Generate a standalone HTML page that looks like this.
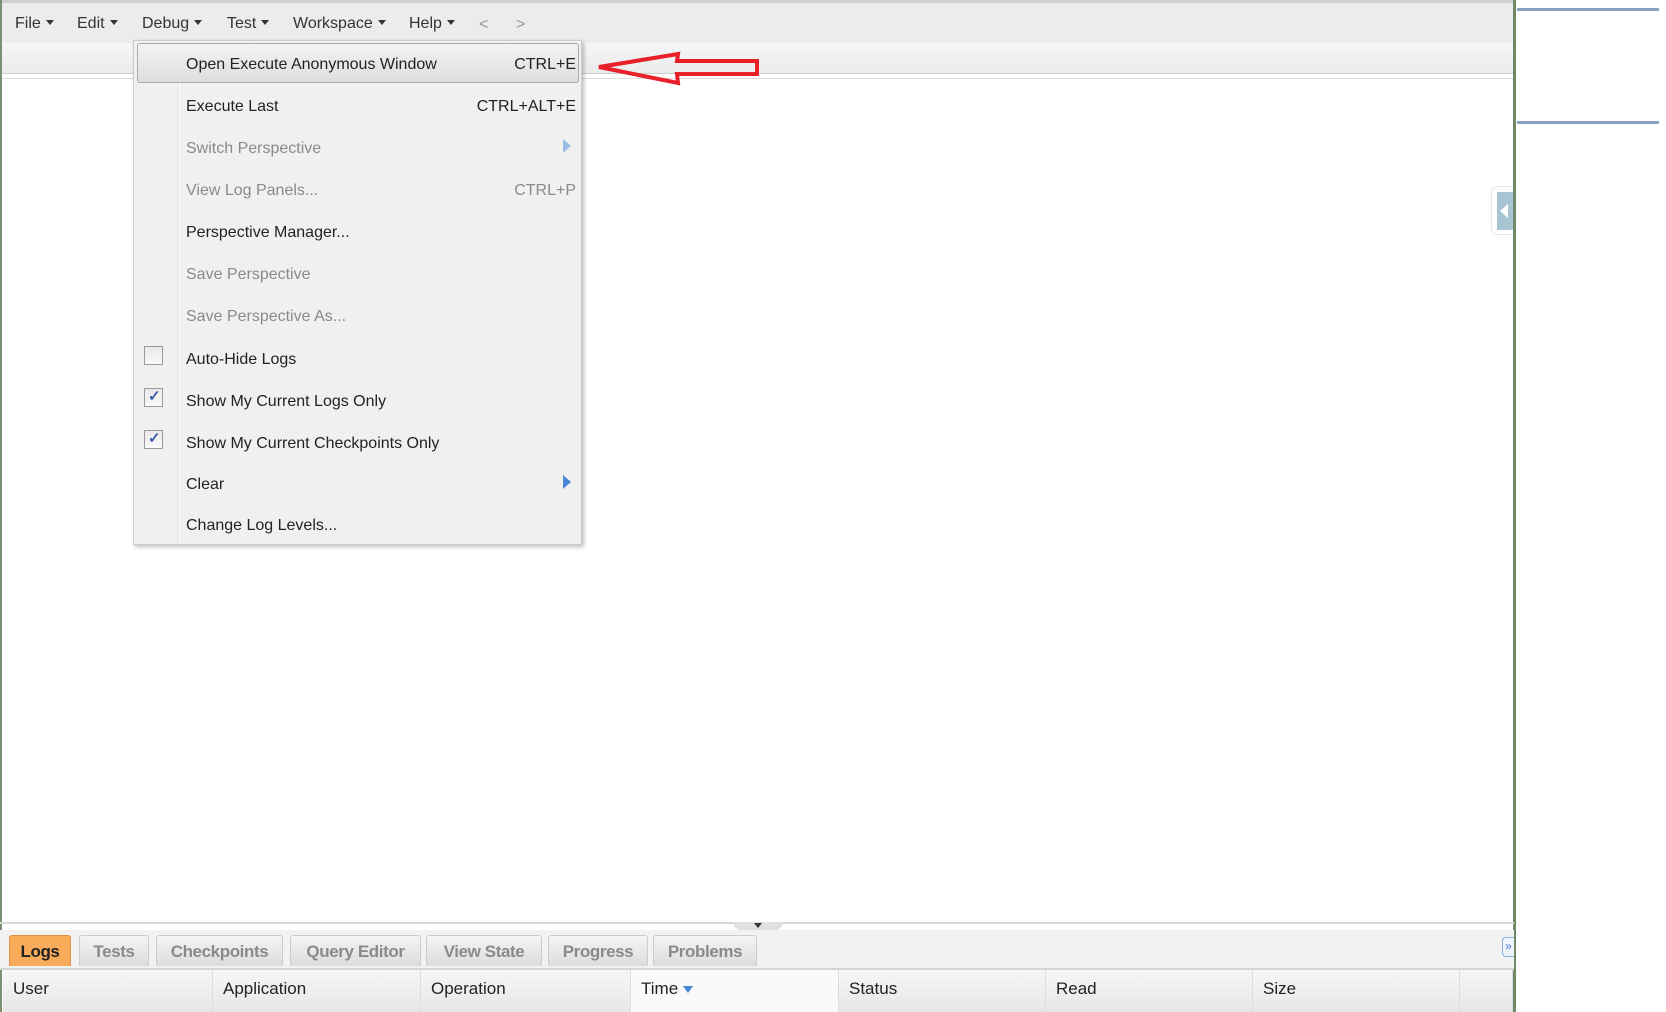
<!DOCTYPE html>
<html><head><meta charset="utf-8"><style>
*{margin:0;padding:0;box-sizing:border-box}
body{width:1666px;height:1012px;position:relative;background:#fff;font-family:"Liberation Sans",sans-serif;overflow:hidden;color:#222}
.abs{position:absolute}
.mb{left:0;top:0;width:1514px;height:43px;background:#ececec;border-top:3px solid #cfcfcf}
.mi{position:absolute;top:15px;font-size:16px;color:#333}
.mi:after{content:"";display:inline-block;margin-left:5px;vertical-align:3px;border:4px solid transparent;border-top:5px solid #333;border-bottom:0}
.tb{left:0;top:43px;width:1514px;height:31px;background:linear-gradient(#f6f6f6,#ebebeb);border-bottom:1px solid #ccc}
.menu{left:133px;top:40px;width:449px;height:505px;background:#f0f0f0;border:1px solid #ccc;box-shadow:2px 2px 4px rgba(0,0,0,.25)}
.gut{left:44px;top:0;width:2px;height:100%;background:#e2e2e2;border-right:1px solid #fff}
.it{position:absolute;left:52px;font-size:16px;color:#222;width:390px}
.it.d{color:#8a8a8a}
.sc{position:absolute;right:0;top:0}
.hl{left:3px;top:2px;width:442px;height:40px;border:1px solid #aaa;border-radius:3px;background:linear-gradient(#f3f3f3,#dedede)}
.cb{position:absolute;left:10px;width:19px;height:19px;border:1px solid #9a9a9a;background:linear-gradient(#e8e8e8,#fafafa)}
.cb.c:after{content:"✓";position:absolute;left:3px;top:-2px;color:#3b5bb0;font-size:15px;font-weight:bold}
.tri{position:absolute;right:10px;width:0;height:0;border-top:7px solid transparent;border-bottom:7px solid transparent;border-left:8px solid #4a86d8}
.tab{position:absolute;top:935px;height:31px;background:linear-gradient(#f4f4f4,#dcdcdc);border:1px solid #ccc;border-bottom:0;border-radius:3px 3px 0 0;font-size:17px;font-weight:bold;color:#8a8a8a;text-align:center;line-height:32px;letter-spacing:-0.4px}
.col{position:absolute;top:970px;height:42px;border-right:1px solid #ddd;font-size:17px;line-height:38px;padding-left:10px;background:linear-gradient(#f7f7f7,#e6e6e6)}
</style></head><body>
<div class="abs mb"></div>
<div class="mi" style="left:15px">File</div>
<div class="mi" style="left:77px">Edit</div>
<div class="mi" style="left:142px">Debug</div>
<div class="mi" style="left:227px">Test</div>
<div class="mi" style="left:293px">Workspace</div>
<div class="mi" style="left:409px">Help</div>
<div class="abs" style="left:479px;top:16px;font-size:16px;color:#999">&lt;</div>
<div class="abs" style="left:516px;top:16px;font-size:16px;color:#999">&gt;</div>
<div class="abs tb"></div>
<div class="abs" style="left:0;top:78px;width:1514px;height:1px;background:#ddd"></div>
<div class="abs" style="left:0;top:0;width:2px;height:1012px;background:#7a9070"></div>
<div class="abs" style="left:1513px;top:0;width:3px;height:1012px;background:#6f8a68"></div>
<div class="abs" style="left:1517px;top:8px;width:142px;height:3px;background:#8aa0c0"></div>
<div class="abs" style="left:1517px;top:121px;width:142px;height:3px;background:#8aa0c0"></div>
<div class="abs" style="left:1491px;top:186px;width:22px;height:49px;border:1px solid #e5e5e5;border-right:0;border-radius:6px 0 0 6px;background:#fff"></div>
<div class="abs" style="left:1497px;top:192px;width:16px;height:38px;background:#a8c4d2"></div>
<div class="abs" style="left:1500px;top:204px;border-top:7px solid transparent;border-bottom:7px solid transparent;border-right:8px solid #fff"></div>

<div class="abs menu">
<div class="abs gut"></div>
<div class="abs hl"></div>
<div class="it" style="top:15px">Open Execute Anonymous Window<span class="sc">CTRL+E</span></div>
<div class="it" style="top:57px">Execute Last<span class="sc">CTRL+ALT+E</span></div>
<div class="it d" style="top:99px">Switch Perspective</div>
<div class="tri" style="top:98px;border-left-color:#9cbce6"></div>
<div class="it d" style="top:141px">View Log Panels...<span class="sc">CTRL+P</span></div>
<div class="it" style="top:183px">Perspective Manager...</div>
<div class="it d" style="top:225px">Save Perspective</div>
<div class="it d" style="top:267px">Save Perspective As...</div>
<div class="cb" style="top:305px"></div>
<div class="it" style="top:310px">Auto-Hide Logs</div>
<div class="cb c" style="top:347px"></div>
<div class="it" style="top:352px">Show My Current Logs Only</div>
<div class="cb c" style="top:389px"></div>
<div class="it" style="top:394px">Show My Current Checkpoints Only</div>
<div class="it" style="top:435px">Clear</div>
<div class="tri" style="top:434px"></div>
<div class="it" style="top:476px">Change Log Levels...</div>
</div>

<svg class="abs" style="left:0;top:0" width="800" height="100"><polygon points="599,67 678,54 677,61 757,61 757,74 677,74 678,83" fill="none" stroke="#e8202a" stroke-width="4" stroke-linejoin="miter"/></svg>

<div class="abs" style="left:0;top:922px;width:1514px;height:2px;background:#d8d8d8"></div>
<div class="abs" style="left:733px;top:922px;width:50px;height:8px;background:#e0e0e0;border-radius:0 0 10px 10px"></div>
<div class="abs" style="left:754px;top:923px;border-left:4px solid transparent;border-right:4px solid transparent;border-top:5px solid #333"></div>
<div class="abs" style="left:0;top:930px;width:1514px;height:40px;background:#f2f2f2;border-bottom:2px solid #d5d5d5"></div>
<div class="tab" style="left:9px;width:62px;background:#f8ac5a;color:#222;border-color:#e09040">Logs</div>
<div class="tab" style="left:79px;width:70px">Tests</div>
<div class="tab" style="left:156px;width:127px">Checkpoints</div>
<div class="tab" style="left:290px;width:131px">Query Editor</div>
<div class="tab" style="left:426px;width:116px">View State</div>
<div class="tab" style="left:548px;width:100px">Progress</div>
<div class="tab" style="left:653px;width:104px">Problems</div>
<div class="abs" style="left:1502px;top:937px;width:12px;height:20px;border:1px solid #8ab0e0;border-right:0;border-radius:4px 0 0 4px;background:#eef4fc;color:#4a7ac8;font-size:12px;line-height:16px;text-align:center">»</div>
<div class="col" style="left:3px;width:210px">User</div>
<div class="col" style="left:213px;width:208px">Application</div>
<div class="col" style="left:421px;width:210px">Operation</div>
<div class="col" style="left:631px;width:208px;background:#fafafa">Time <span style="display:inline-block;border-left:5px solid transparent;border-right:5px solid transparent;border-top:7px solid #4a86d8;vertical-align:1px"></span></div>
<div class="col" style="left:839px;width:207px">Status</div>
<div class="col" style="left:1046px;width:207px">Read</div>
<div class="col" style="left:1253px;width:207px">Size</div>
<div class="col" style="left:1460px;width:53px"></div>
</body></html>
